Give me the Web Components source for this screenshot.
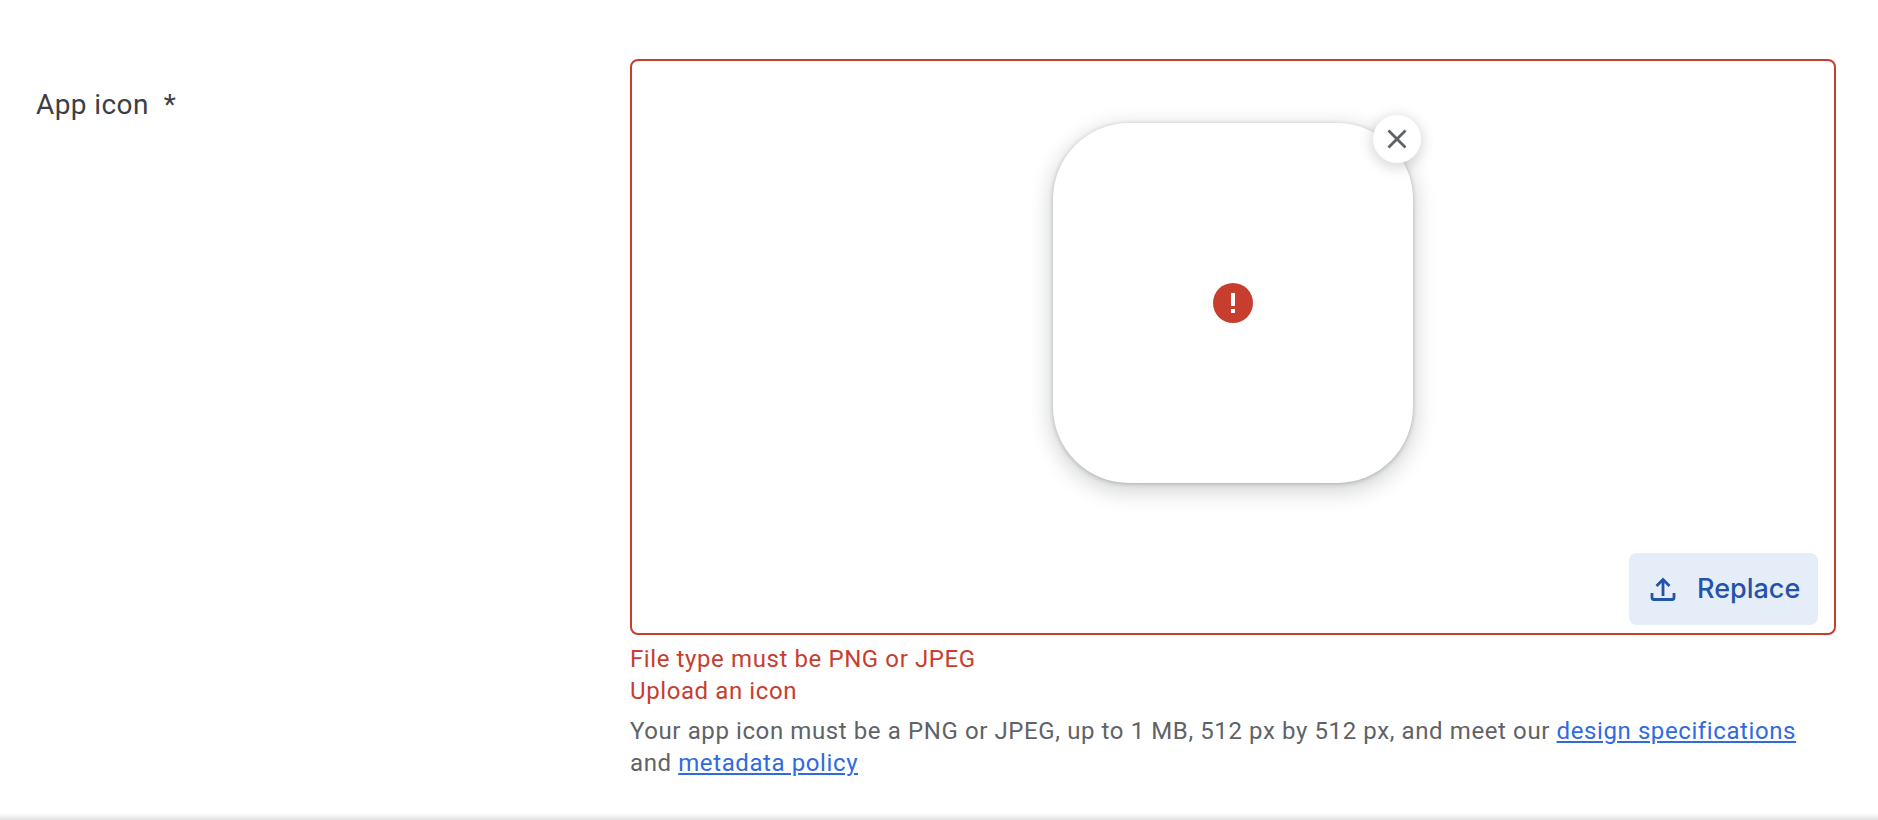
<!DOCTYPE html>
<html>
<head>
<meta charset="utf-8">
<title>App icon</title>
<style>
html,body{margin:0;height:100%;background:#fff;overflow:hidden;}
body{font-family:Roboto,"Liberation Sans",sans-serif;}
a{color:#2f6bdf;}
</style>
</head>
<body>
<icon-field>
  <span slot="label">App icon</span>
  <icon-uploader></icon-uploader>
  <span slot="error">File type must be PNG or JPEG</span>
  <span slot="error">Upload an icon</span>
  <span slot="help">Your app icon must be a PNG or JPEG, up to 1 MB, 512 px by 512 px, and meet our <a href="#">design specifications</a> and <a href="#">metadata policy</a></span>
</icon-field>

<script>
// Form row: label on the left, control and messages on the right
class IconField extends HTMLElement {
  constructor(){
    super();
    this.attachShadow({mode:'open'});
    this.shadowRoot.innerHTML = `
    <style>
    :host{display:grid;grid-template-columns:630px 1206px;height:820px;box-sizing:border-box;padding-top:59px;position:relative;}
    .label{display:flex;align-items:flex-start;padding:30px 0 0 36px;font-size:28px;line-height:32px;color:#3c4043;letter-spacing:.4px;}
    .star{margin-left:15px;}
    .errors{margin-top:8px;display:flex;flex-direction:column;font-size:24px;line-height:32px;letter-spacing:.6px;color:#c73e2f;}
    .help{margin-top:8px;padding-right:20px;font-size:24px;line-height:32px;letter-spacing:.6px;color:#5f6368;}
    ::slotted(span){display:block;}
    .edge{position:absolute;left:0;right:0;bottom:0;height:7px;background:linear-gradient(#fff,#e2e2e2);}
    </style>
    <div class="label"><slot name="label"></slot><span class="star">*</span></div>
    <div>
      <slot></slot>
      <div class="errors"><slot name="error"></slot></div>
      <div class="help"><slot name="help"></slot></div>
    </div>
    <div class="edge"></div>`;
  }
}

// Red framed box holding the icon preview and the replace button
class IconUploader extends HTMLElement {
  constructor(){
    super();
    this.attachShadow({mode:'open'});
    this.shadowRoot.innerHTML = `
    <style>
    :host{display:flex;justify-content:center;box-sizing:border-box;height:576px;padding-top:62px;border:2px solid #c73e2f;border-radius:8px;position:relative;}
    .tile{position:relative;width:360px;height:360px;border-radius:76px;background:#fff;display:flex;align-items:center;justify-content:center;
      box-shadow:0 1px 4px rgba(60,64,67,.3),0 6px 20px 4px rgba(60,64,67,.2);}
    .tile svg{display:block;}
    .close{position:absolute;top:-8px;right:-8px;width:48px;height:48px;border-radius:50%;background:#fff;display:flex;align-items:center;justify-content:center;
      box-shadow:0 3px 12px 3px rgba(60,64,67,.18);}
    .replace{position:absolute;right:16px;bottom:8px;}
    </style>
    <div class="tile">
      <svg width="40" height="40" viewBox="0 0 40 40"><circle cx="20" cy="20" r="20" fill="#c73e2f"/><rect x="18" y="10" width="4" height="13" fill="#fff"/><rect x="18" y="26" width="4" height="4" fill="#fff"/></svg>
      <div class="close"><svg width="24" height="24" viewBox="0 0 24 24"><path d="M3.500 3.500L20.500 20.500M20.500 3.500L3.500 20.500" stroke="#5f6368" stroke-width="2.800" fill="none"/></svg></div>
    </div>
    <upload-button class="replace">Replace</upload-button>`;
  }
}

class UploadButton extends HTMLElement {
  constructor(){
    super();
    this.attachShadow({mode:'open'});
    this.shadowRoot.innerHTML = `
    <style>
    :host{display:inline-flex;align-items:center;box-sizing:border-box;width:189px;height:72px;padding:0 0 2px 21px;gap:21px;background:#e5edf9;border-radius:8px;
      font-family:Inter,Roboto,sans-serif;font-size:27px;font-weight:500;color:#2553aa;}
    svg{display:block;}
    </style>
    <svg width="26" height="26" viewBox="0 0 26 26"><path d="M13 21V5M6.5 11L13 4.500 19.500 11" stroke="#2553aa" stroke-width="2.800" fill="none"/><path d="M2 18v4.500a2 2 0 0 0 2 2h18a2 2 0 0 0 2-2V18" stroke="#2553aa" stroke-width="2.800" fill="none"/></svg>
    <span><slot></slot></span>`;
  }
}

customElements.define('icon-field',IconField);
customElements.define('icon-uploader',IconUploader);
customElements.define('upload-button',UploadButton);
</script>
</body>
</html>
